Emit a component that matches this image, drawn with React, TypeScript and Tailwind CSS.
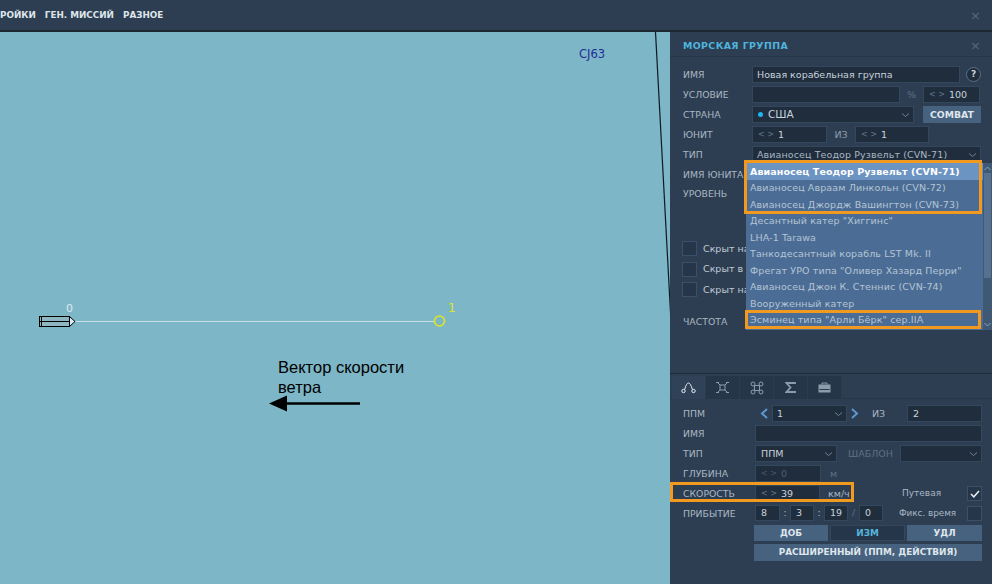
import React from "react";

const font = { fontFamily: '"DejaVu Sans", sans-serif' };

function Label({ children, w = "w-[69px]" }: { children: React.ReactNode; w?: string }) {
  return <div className={`${w} shrink-0 text-[9.3px] text-[#aab6c3] leading-none`}>{children}</div>;
}

function Chevron({ color = "#6f8196" }: { color?: string }) {
  return (
    <svg width="9" height="6" viewBox="0 0 9 6" className="shrink-0">
      <path d="M1 1.5 L4.5 4.5 L8 1.5" fill="none" stroke={color} strokeWidth="1" />
    </svg>
  );
}

function Box({ w, children, className = "" }: { w: string; children?: React.ReactNode; className?: string }) {
  return (
    <div className={`${w} h-full shrink-0 flex items-center bg-[#1f2d3d] border border-[#33485f] text-[9.5px] text-[#c9d3dc] leading-none ${className}`}>
      {children}
    </div>
  );
}

function Spin({ w, value, dim = false, className = "" }: { w: string; value: string; dim?: boolean; className?: string }) {
  return (
    <Box w={w} className={`pl-[5px] ${className}`}>
      <span className={`text-[#66788c] text-[8px] mr-[4px] ${dim ? "opacity-60" : ""}`}>{"< >"}</span>
      <span className={dim ? "text-[#4f6175]" : ""}>{value}</span>
    </Box>
  );
}

function Check({ checked = false }: { checked?: boolean }) {
  return (
    <div className="w-[15px] h-[15px] shrink-0 flex items-center justify-center bg-[#26364a] border border-[#3b4f66]">
      {checked && (
        <svg width="10" height="8" viewBox="0 0 10 8">
          <path d="M1 4 L3.8 6.8 L9 1" fill="none" stroke="#e8edf2" strokeWidth="1.5" />
        </svg>
      )}
    </div>
  );
}

const ships: string[] = [
  "Авианосец Теодор Рузвельт (CVN-71)",
  "Авианосец Авраам Линкольн (CVN-72)",
  "Авианосец Джордж Вашингтон (CVN-73)",
  'Десантный катер "Хиггинс"',
  "LHA-1 Tarawa",
  "Танкодесантный корабль LST Mk. II",
  'Фрегат УРО типа "Оливер Хазард Перри"',
  "Авианосец Джон К. Стеннис (CVN-74)",
  "Вооруженный катер",
  'Эсминец типа "Арли Бёрк" сер.IIA',
];

function Dropdown() {
  return (
    <div className="absolute left-[76px] top-[131px] w-[246px] h-[167px] flex">
      <div className="w-[237px] h-full bg-[#4b6d95] overflow-hidden">
        {ships.map((s, i) => (
          <div
            key={s}
            className={`h-[16.55px] pl-[4px] flex items-center text-[9.5px] leading-none whitespace-nowrap ${
              i === 0 ? "bg-[#6c94c2] text-white font-bold tracking-[0.09px]" : "text-[#b5c4d4] tracking-[0.12px]"
            }`}
          >
            {s}
          </div>
        ))}
      </div>
      <div className="w-[9px] h-full bg-[#3f5975] flex flex-col items-center justify-between py-[3px]">
        <svg width="7" height="5" viewBox="0 0 7 5"><path d="M0.5 4 L3.5 1 L6.5 4" fill="none" stroke="#8fa3b8" /></svg>
        <div className="w-[7px] flex-1 my-[2px] mb-[44px] bg-[#55718f]" />
        <svg width="7" height="5" viewBox="0 0 7 5"><path d="M0.5 1 L3.5 4 L6.5 1" fill="none" stroke="#8fa3b8" /></svg>
      </div>
    </div>
  );
}

function TabIcon({ i, active }: { i: number; active?: boolean }) {
  const c = active ? "#e6ecf2" : "#8d9cad";
  if (i === 0)
    return (
      <svg width="15" height="13" viewBox="0 0 15 13" fill="none" stroke={c} strokeWidth="1">
        <circle cx="2.5" cy="10" r="1.7" />
        <circle cx="12.5" cy="10" r="1.7" />
        <path d="M3.6 8.6 Q5.5 2 7.5 2 Q9.5 2 11.4 8.6" />
      </svg>
    );
  if (i === 1)
    return (
      <svg width="13" height="13" viewBox="0 0 13 13" fill="none" stroke={c} strokeWidth="1">
        <rect x="4" y="4" width="5" height="5" />
        <path d="M1 1 L4 4 M12 1 L9 4 M1 12 L4 9 M12 12 L9 9 M0 1.5 H3 M10 1.5 H13 M0 11.5 H3 M10 11.5 H13" />
      </svg>
    );
  if (i === 2)
    return (
      <svg width="14" height="14" viewBox="0 0 14 14" fill="none" stroke={c} strokeWidth="1">
        <circle cx="3" cy="3" r="2" />
        <circle cx="11" cy="3" r="2" />
        <circle cx="3" cy="11" r="2" />
        <circle cx="11" cy="11" r="2" />
        <path d="M4.5 4.5 H9.5 V9.5 H4.5 Z" />
      </svg>
    );
  if (i === 3)
    return (
      <svg width="11" height="11" viewBox="0 0 11 11" fill="none" stroke={c} strokeWidth="1.8">
        <path d="M10 2 V1 H1.5 L5.5 5.5 L1.5 10 H10 V9" />
      </svg>
    );
  return (
    <svg width="13" height="11" viewBox="0 0 13 11">
      <path d="M4 2.5 V1 H9 V2.5" fill="none" stroke={c} />
      <rect x="0.5" y="2.5" width="12" height="8" fill={c} />
      <rect x="1.5" y="7" width="10" height="1" fill="#2a3b4f" />
    </svg>
  );
}

function Btn({ children, w, h = "h-[16px]", active = false }: { children: React.ReactNode; w: string; h?: string; active?: boolean }) {
  return (
    <div
      className={`${w} ${h} flex items-center justify-center text-[8.9px] font-bold leading-none ${
        active ? "bg-[#26364a] border border-[#33485f] text-[#57b5dc]" : "bg-[#47627f] text-[#dfe6ec]"
      }`}
    >
      {children}
    </div>
  );
}

function Row({ children, h = "h-[17px]", className = "" }: { children: React.ReactNode; h?: string; className?: string }) {
  return <div className={`${h} flex items-center shrink-0 ${className}`}>{children}</div>;
}

function GroupSection() {
  return (
    <div className="h-[342px] shrink-0 flex flex-col border-b border-[#1f2b39]">
      <div className="h-[25px] shrink-0 flex items-center justify-between pt-[3px] pl-[13px] pr-[11px] border-b border-[#27374a]">
        <span className="text-[9.4px] font-bold tracking-[0.4px] text-[#4fb4dc] leading-none">МОРСКАЯ ГРУППА</span>
        <span className="text-[13px] text-[#56677a] leading-none">×</span>
      </div>
      <div className="pl-[13px] pr-[11px] pt-[9px] flex flex-col gap-[3px]">
        <Row>
          <Label>ИМЯ</Label>
          <Box w="w-[208px]" className="pl-[4px] text-[9.2px]">Новая корабельная группа</Box>
          <div className="ml-[6px] w-[15px] h-[15px] rounded-full border border-[#5d7086] bg-[#1f2d3d] flex items-center justify-center text-[9px] font-bold text-[#c9d3dc] leading-none">?</div>
        </Row>
        <Row>
          <Label>УСЛОВИЕ</Label>
          <Box w="w-[148px]" />
          <span className="w-[23px] text-center text-[9.5px] text-[#5d7086] leading-none">%</span>
          <Spin w="w-[57px]" value="100" />
        </Row>
        <Row>
          <Label>СТРАНА</Label>
          <Box w="w-[162px]" className="pl-[5px] pr-[3px] justify-between text-[10.5px]">
            <span className="flex items-center gap-[5px]">
              <span className="w-[5px] h-[5px] rounded-full bg-[#1fb4f0]" />США
            </span>
            <Chevron />
          </Box>
          <div className="ml-[9px] w-[58px] h-full bg-[#47627f] flex items-center justify-center text-[9.3px] font-bold text-[#dfe6ec] leading-none">COMBAT</div>
        </Row>
        <Row>
          <Label>ЮНИТ</Label>
          <Spin w="w-[75px]" value="1" />
          <span className="w-[28px] text-center text-[9.5px] text-[#8d9cad] leading-none">ИЗ</span>
          <Spin w="w-[74px]" value="1" />
        </Row>
        <Row>
          <Label>ТИП</Label>
          <Box w="w-[229px]" className="pl-[4px] pr-[3px] justify-between tracking-[0.1px]">
            <span className="text-[#aab6c3]">Авианосец Теодор Рузвельт (CVN-71)</span>
            <Chevron />
          </Box>
        </Row>
        <Row h="h-[16px]" className="mt-[1px]"><Label>ИМЯ ЮНИТА</Label></Row>
        <Row h="h-[16px]"><Label>УРОВЕНЬ</Label></Row>
      </div>
      <div className="pl-[12px] mt-[39px] flex flex-col gap-[5.5px]">
        {["Скрыт на", "Скрыт в", "Скрыт на"].map((t, i) => (
          <div key={i} className="h-[15px] flex items-center gap-[6px]">
            <Check />
            <span className="text-[9.5px] text-[#c0cad4] leading-none">{t}</span>
          </div>
        ))}
      </div>
      <div className="pl-[13px] mt-[20px]"><Label>ЧАСТОТА</Label></div>
    </div>
  );
}

function RouteSection() {
  return (
    <div className="flex-1 flex flex-col">
      <div className="h-[23px] mt-[2px] flex pl-[2px] border-b border-[#27374a]">
        {[0, 1, 2, 3, 4].map((i) => (
          <div
            key={i}
            className={`w-[34px] h-[23px] flex items-center justify-center border-r border-[#2b3c50] ${
              i === 0 ? "bg-[#2f4258]" : "bg-[#263649]"
            }`}
          >
            <TabIcon i={i} active={i === 0} />
          </div>
        ))}
      </div>
      <div className="pl-[13px] pr-[10px] pt-[6px] flex flex-col gap-[3px]">
        <Row>
          <Label w="w-[77px]">ППМ</Label>
          <svg width="9" height="11" viewBox="0 0 9 11" className="mr-[3px]"><path d="M7 1 L2 5.5 L7 10" fill="none" stroke="#5c97cf" strokeWidth="2" /></svg>
          <Box w="w-[75px]" className="pl-[4px] pr-[3px] justify-between">1<Chevron /></Box>
          <svg width="9" height="11" viewBox="0 0 9 11" className="ml-[3px]"><path d="M2 1 L7 5.5 L2 10" fill="none" stroke="#5c97cf" strokeWidth="2" /></svg>
          <span className="ml-[13px] w-[35px] text-[9.5px] text-[#aab6c3] leading-none">ИЗ</span>
          <Box w="w-[75px]" className="pl-[5px]">2</Box>
        </Row>
        <Row>
          <Label w="w-[72px]">ИМЯ</Label>
          <Box w="w-[227px]" />
        </Row>
        <Row>
          <Label w="w-[72px]">ТИП</Label>
          <Box w="w-[82px]" className="pl-[5px] pr-[3px] justify-between">ППМ<Chevron /></Box>
          <span className="ml-[11px] w-[52px] text-[9.5px] text-[#5d7086] leading-none">ШАБЛОН</span>
          <Box w="w-[82px]" className="pr-[3px] justify-end"><Chevron /></Box>
        </Row>
        <Row>
          <Label w="w-[72px] pt-[1px]">ГЛУБИНА</Label>
          <Spin w="w-[66px]" value="0" dim />
          <span className="ml-[9px] text-[9.5px] text-[#5d7086] leading-none">м</span>
        </Row>
        <Row>
          <Label w="w-[72px] pt-[1px]">СКОРОСТЬ</Label>
          <Spin w="w-[65px]" value="39" />
          <span className="ml-[8px] w-[74px] text-[9.5px] text-[#aab6c3] leading-none">км/ч</span>
          <span className="w-[53px] text-[9px] text-[#aab6c3] leading-none">Путевая</span>
          <div className="ml-[12px]"><Check checked /></div>
        </Row>
        <Row h="h-[16px]">
          <Label w="w-[72px] pt-[1px]">ПРИБЫТИЕ</Label>
          <Box w="w-[25px]" className="pl-[5px]">8</Box>
          <span className="w-[10px] text-center text-[9.5px] text-[#aab6c3] leading-none">:</span>
          <Box w="w-[24px]" className="pl-[5px]">3</Box>
          <span className="w-[10px] text-center text-[9.5px] text-[#aab6c3] leading-none">:</span>
          <Box w="w-[24px]" className="pl-[5px]">19</Box>
          <span className="w-[11px] text-center text-[9.5px] text-[#5d7086] leading-none">/</span>
          <Box w="w-[24px]" className="pl-[5px]">0</Box>
          <span className="ml-[16px] w-[62px] text-[8.8px] text-[#aab6c3] leading-none whitespace-nowrap">Фикс. время</span>
          <div className="ml-[6px]"><Check /></div>
        </Row>
        <div className="pl-[71px] flex flex-col gap-[3px] mt-[1px]">
          <div className="flex gap-[2px]">
            <Btn w="w-[74px]">ДОБ</Btn>
            <Btn w="w-[75px]" active>ИЗМ</Btn>
            <Btn w="w-[75px]">УДЛ</Btn>
          </div>
          <Btn w="w-[228px]" h="h-[17px]">РАСШИРЕННЫЙ (ППМ, ДЕЙСТВИЯ)</Btn>
        </div>
      </div>
    </div>
  );
}

function MapCanvas() {
  return (
    <div className="relative w-[670px] shrink-0 h-full bg-[#7db6c6] overflow-hidden">
      <svg width="670" height="552" viewBox="0 0 670 552" className="absolute left-0 top-0">
        <path d="M655.5 0 L671 290" stroke="#0d1a22" strokeWidth="1.2" fill="none" />
        <path d="M76 289.5 H434" stroke="#c8dfe6" strokeWidth="1" />
        <rect x="39.5" y="284.5" width="30" height="10" fill="#8fb7c2" stroke="#000" strokeWidth="1" />
        <path d="M39.5 289.5 H69.5 M41.5 285 V294" stroke="#000" strokeWidth="1" />
        <path d="M69.5 284.5 L75 289.5 L69.5 294.5 Z" fill="#dbeaf0" stroke="#000" strokeWidth="1" />
        <circle cx="439.5" cy="289" r="5" fill="none" stroke="#dfe81f" strokeWidth="1.6" />
        <path d="M360 371.5 H284" stroke="#000" strokeWidth="2.4" />
        <path d="M269 371.5 L287 363.5 V379.5 Z" fill="#000" />
      </svg>
      <span className="absolute left-[579px] top-[17px] text-[11.5px] text-[#1f2f96] leading-none" style={font}>СJ63</span>
      <span className="absolute left-[66px] top-[271px] text-[11px] text-[#dbeaf0] leading-none" style={font}>0</span>
      <span className="absolute left-[448px] top-[270px] text-[12px] text-[#dfe81f] leading-none" style={font}>1</span>
      <div className="absolute left-[278px] top-[325px] text-[16.5px] leading-[20px] text-black" style={{ fontFamily: '"Liberation Sans", sans-serif' }}>
        Вектор скорости<br />ветра
      </div>
    </div>
  );
}

export default function App() {
  return (
    <div className="w-[992px] h-[584px] flex flex-col overflow-hidden bg-[#2d3e52]" style={font}>
      <div className="h-[32px] shrink-0 flex items-center justify-between pt-[1px] bg-[#2d3e52] border-b-2 border-[#1c2733] pr-[11px]">
        <div className="flex gap-[9px] text-[8.8px] font-bold text-[#dfe5ea] leading-none">
          <span>РОЙКИ</span>
          <span>ГЕН. МИССИЙ</span>
          <span>РАЗНОЕ</span>
        </div>
        <span className="text-[13px] text-[#56677a] leading-none">×</span>
      </div>
      <div className="flex-1 flex min-h-0">
        <MapCanvas />
        <div className="relative w-[322px] shrink-0 h-full flex flex-col bg-[#2d3e52]">
          <GroupSection />
          <RouteSection />
          <Dropdown />
          <div className="absolute left-[74px] top-[128px] w-[238px] h-[54px] border-[3px] border-[#f29a1f]" />
          <div className="absolute left-[75px] top-[278px] w-[236px] h-[19px] border-[3px] border-[#f29a1f]" />
          <div className="absolute left-0 top-[450px] w-[184px] h-[20px] border-[3px] border-[#f29a1f]" />
        </div>
      </div>
    </div>
  );
}
